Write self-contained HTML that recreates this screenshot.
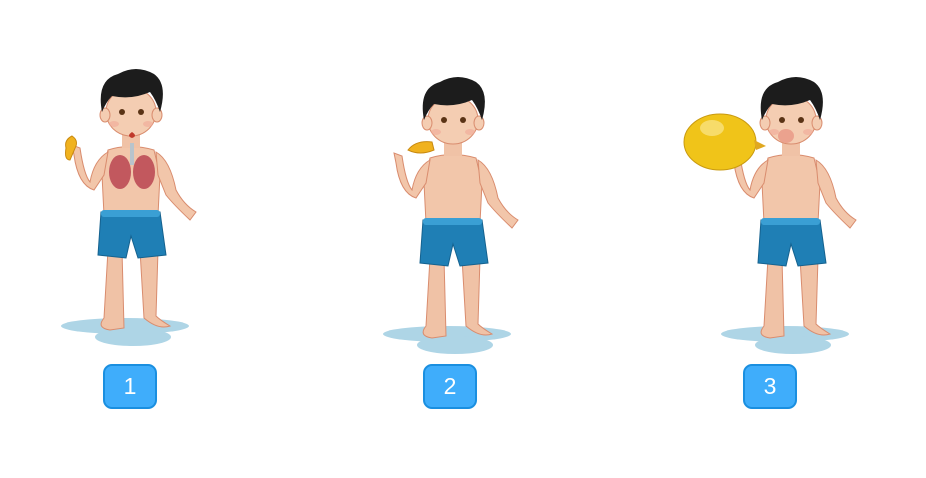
<!DOCTYPE html>
<html><head><style>
body{margin:0;width:926px;height:478px;background:#fff;overflow:hidden;font-family:"Liberation Sans",sans-serif}
.lb{position:absolute;top:364px;width:50px;height:41px;border:2px solid #1a8fe0;border-radius:9px;background:#3fadfb;color:#fff;font-size:23px;text-align:center;line-height:41px}
</style></head><body>
<svg width="926" height="478" style="position:absolute;left:0;top:0">
<defs>
<g id="boy">
<ellipse cx="125" cy="326" rx="64" ry="8" fill="#aed5e6"/>
<ellipse cx="133" cy="337" rx="38" ry="9" fill="#aed5e6"/>
<path d="M108 250 L104 318 Q96 328 110 330 L124 328 L122 250Z" fill="#f0c2a6" stroke="#d98c6e" stroke-width="1"/>
<path d="M140 250 L144 318 Q158 330 170 326 Q160 320 156 316 L158 250Z" fill="#f0c2a6" stroke="#d98c6e" stroke-width="1"/>
<path d="M108 150 Q130 143 154 150 L160 175 L158 215 L104 215 L102 175Z" fill="#f2c6aa" stroke="#d98c6e" stroke-width="1"/>
<path d="M156 152 Q170 160 176 190 Q184 205 196 212 L190 220 Q174 205 166 195 L158 175Z" fill="#f2c6aa" stroke="#d98c6e" stroke-width="1"/>
<path d="M108 152 Q94 160 90 182 Q84 175 80 148 L72 145 L74 155 Q78 185 94 190 L104 175Z" fill="#f2c6aa" stroke="#d98c6e" stroke-width="1"/>
<path d="M101 212 L160 212 L166 255 L138 258 L131 236 L126 258 L98 255Z" fill="#1f7fb5" stroke="#15628f" stroke-width="1"/>
<rect x="101" y="210" width="59" height="7" rx="3" fill="#3a9fd4"/>
<rect x="122" y="130" width="18" height="18" fill="#f0c2a6"/>
<ellipse cx="131" cy="112" rx="25" ry="24" fill="#f4cdb2" stroke="#d98c6e" stroke-width="1"/>
<ellipse cx="105" cy="115" rx="5" ry="7" fill="#f4cdb2" stroke="#d98c6e"/>
<ellipse cx="157" cy="115" rx="5" ry="7" fill="#f4cdb2" stroke="#d98c6e"/>
<path d="M102 112 Q96 80 118 74 Q136 64 154 74 Q168 84 160 112 Q156 100 150 92 Q132 100 112 96 Q106 102 102 112Z" fill="#1c1c1c"/>
<circle cx="122" cy="112" r="3" fill="#5a3315"/><circle cx="141" cy="112" r="3" fill="#5a3315"/>
<ellipse cx="114" cy="124" rx="5" ry="3" fill="#f0a898" opacity=".6"/>
<ellipse cx="148" cy="124" rx="5" ry="3" fill="#f0a898" opacity=".6"/>
</g>
</defs>
<use href="#boy"/>
<ellipse cx="120" cy="172" rx="11" ry="17" fill="#c2585e"/>
<ellipse cx="144" cy="172" rx="11" ry="17" fill="#c2585e"/>
<rect x="130" y="143" width="4" height="22" fill="#b8c4cc"/>
<path d="M132 132 Q126 136 132 138 Q138 136 132 132Z" fill="#c0392b"/>
<path d="M66 148 Q64 140 72 136 Q78 140 76 146 L70 160 Q64 160 66 148Z" fill="#f0b21f" stroke="#c98a10"/>
<use href="#boy" transform="translate(322,8)"/>
<path d="M408 150 Q416 140 432 142 L434 150 Q420 156 408 150Z" fill="#f0b21f" stroke="#c98a10"/>
<use href="#boy" transform="translate(660,8)"/>
<ellipse cx="720" cy="142" rx="36" ry="28" fill="#f0c419" stroke="#c99a10"/>
<ellipse cx="712" cy="128" rx="12" ry="8" fill="#f7dc6a"/>
<path d="M754 140 L766 146 L756 150Z" fill="#e0a820"/>
<ellipse cx="786" cy="136" rx="8" ry="7" fill="#eba28e"/>
</svg>
<div class="lb" style="left:103px">1</div>
<div class="lb" style="left:423px">2</div>
<div class="lb" style="left:743px">3</div>
</body></html>
